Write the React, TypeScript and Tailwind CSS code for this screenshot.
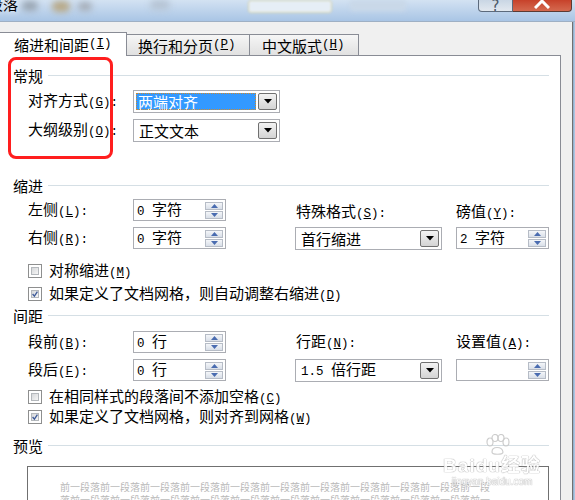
import React from 'react'

// half-width latin, like SimSun's ascii glyphs
function A({ children }: { children: React.ReactNode }) {
  return <span className="font-['Liberation_Mono',monospace] text-[12.5px] whitespace-pre">{children}</span>
}

function Key({ k, colon = true }: { k: string; colon?: boolean }) {
  return (
    <A>
      (<u>{k}</u>){colon ? ':' : ''}
    </A>
  )
}

function DownArrow() {
  return (
    <svg width="8" height="5" viewBox="0 0 8 5">
      <path d="M0 0 H8 L4 4.5 Z" fill="#000" />
    </svg>
  )
}

function Spin({ num, unit }: { num?: string; unit?: string }) {
  return (
    <div className="w-[93px] h-[22px] border border-[#abadb3] bg-white flex items-center justify-between pl-[3px] pr-[2px]">
      <span className="whitespace-pre">
        {num && <A>{num + ' '}</A>}
        {unit}
      </span>
      <div className="flex flex-col gap-px">
        <div className="w-[18px] h-[8px] border border-[#b6bcc6] bg-gradient-to-b from-[#f4f6f9] to-[#d9dfe8] flex items-center justify-center">
          <svg width="7" height="4" viewBox="0 0 7 4"><path d="M0 4 H7 L3.5 0 Z" fill="#4a6cb0" /></svg>
        </div>
        <div className="w-[18px] h-[8px] border border-[#b6bcc6] bg-gradient-to-b from-[#f4f6f9] to-[#d9dfe8] flex items-center justify-center">
          <svg width="7" height="4" viewBox="0 0 7 4"><path d="M0 0 H7 L3.5 4 Z" fill="#4a6cb0" /></svg>
        </div>
      </div>
    </div>
  )
}

function Select({ children, highlight }: { children: React.ReactNode; highlight?: boolean }) {
  return (
    <div className="w-[147px] h-[23px] border border-[#abadb3] bg-white flex items-stretch p-[2px]">
      <div className="flex-1 flex items-center mr-[2px]">
        {highlight ? (
          <div className="w-full h-full bg-[#3399ff] text-white flex items-center pl-[2px] outline outline-1 outline-dotted outline-[#d08a2c] -outline-offset-1">
            {children}
          </div>
        ) : (
          <span className="pl-[3px] whitespace-pre">{children}</span>
        )}
      </div>
      <div className="w-[19px] border border-[#707070] rounded-[2px] bg-gradient-to-b from-[#f3f3f3] to-[#d4d4d4] flex items-center justify-center">
        <DownArrow />
      </div>
    </div>
  )
}

function Check({ checked }: { checked?: boolean }) {
  return (
    <div className="w-[14px] h-[14px] border border-[#8e8f8f] bg-white p-[2px]">
      <div className="w-full h-full border border-[#b4b8bc] bg-gradient-to-br from-[#d6d8da] to-[#f6f6f6] flex items-center justify-center">
        {checked && (
          <svg width="10" height="10" viewBox="0 0 10 10" className="-mt-px">
            <path d="M1 5 L4 8.5 L9 1" stroke="#3d5a99" strokeWidth="2.2" fill="none" />
          </svg>
        )}
      </div>
    </div>
  )
}

function Section({ title, className }: { title: string; className: string }) {
  return (
    <div className={'flex items-center h-[20px] ' + className}>
      <span>{title}</span>
      <div className="flex-1 h-px bg-[#d5dfe5] ml-[5px]" />
    </div>
  )
}

function CheckRow({ children, checked, className = '' }: { children: React.ReactNode; checked?: boolean; className?: string }) {
  return (
    <div className={'flex items-center h-[20px] ml-[15px] gap-[7px] ' + className}>
      <Check checked={checked} />
      <span>{children}</span>
    </div>
  )
}

export default function App() {
  const line1 = '前一段落'.repeat(10) + '前一段'
  const line2 = '落' + '前一段落'.repeat(10) + '前一'

  return (
    <div className="w-[575px] h-[500px] overflow-hidden relative flex flex-col bg-[#f0f0f0] text-[15px] leading-none text-black font-['Noto_Sans_CJK_SC','Noto_Sans',sans-serif]">
      {/* title bar */}
      <div className="h-[21px] shrink-0 relative overflow-hidden flex bg-gradient-to-b from-[#d3e2f2] to-[#a9c5e5]">
        <div className="absolute left-[22px] top-[1px] w-[16px] h-[10px] rounded-full bg-[#9aa6b3] blur-[3px]" />
        <div className="absolute left-[52px] top-[1px] w-[18px] h-[11px] rounded-full bg-[#b8a988] blur-[3px]" />
        <div className="absolute left-[78px] top-[2px] w-[14px] h-[9px] rounded-full bg-[#a6aeb8] blur-[3px]" />
        <div className="absolute left-[150px] top-[0px] w-[20px] h-[10px] rounded-full bg-[#b6c4d4] blur-[3px]" />
        <div className="absolute left-[248px] top-[0px] w-[84px] h-[13px] rounded-[3px] bg-[#e6eef6] border border-[#d8d6b0] blur-[1px]" />
        <div className="absolute left-[350px] top-[0px] w-[56px] h-[11px] rounded-[3px] bg-[#c9d8e8] blur-[2px]" />
        <span className="relative ml-[-12px] mt-[-4px] [text-shadow:0_0_6px_#fff]">段落</span>
        <div className="flex-1" />
        <div className="relative flex mr-[3px] h-[12px]">
          <div className="w-[35px] h-[12px] border border-[#5c6a7c] border-t-0 rounded-bl-[4px] bg-gradient-to-b from-[#c9d6e4] to-[#e2e8ef] flex justify-center items-end overflow-hidden">
            <span className="text-[15px] text-[#4a5566] mb-[-3px] font-['DejaVu_Sans',sans-serif]">?</span>
          </div>
          <div className="w-[59px] h-[12px] border border-[#5c3a33] border-t-0 border-l-0 rounded-br-[4px] bg-gradient-to-b from-[#c7412a] to-[#d4694f] flex justify-center items-end overflow-hidden">
            <svg width="16" height="9" viewBox="0 0 16 9" className="mb-[2px]">
              <path d="M1 8 L8 1 L15 8" stroke="#fff" strokeWidth="3" fill="none" />
            </svg>
          </div>
        </div>
      </div>

      {/* dialog body */}
      <div className="flex-1 flex border-t border-[#9fb0c4]">
        <div className="w-[573px] flex flex-col border-r border-[#707070] pt-[10px]">
          {/* tabs */}
          <div className="flex items-end h-[24px] -ml-px relative z-10 -mb-px">
            <div className="w-[128px] h-[24px] bg-white border border-b-0 border-[#898c95] flex items-center pl-[14px]">
              缩进和间距<Key k="I" colon={false} />
            </div>
            <div className="w-[124px] h-[22px] -ml-px border border-[#898c95] bg-gradient-to-b from-[#f6f6f6] to-[#e1e1e1] flex items-center pl-[11px]">
              换行和分页<Key k="P" colon={false} />
            </div>
            <div className="w-[110px] h-[22px] -ml-px border border-[#898c95] bg-gradient-to-b from-[#f6f6f6] to-[#e1e1e1] flex items-center pl-[12px]">
              中文版式<Key k="H" colon={false} />
            </div>
          </div>

          {/* panel */}
          <div className="flex-1 w-[562px] -ml-px bg-white border border-[#898c95] pl-[13px] pr-[11px] flex flex-col">
            <Section title="常规" className="mt-[9px]" />
            <div className="flex items-center h-[22px] ml-[15px] mt-[5px]">
              <span className="w-[105px]">对齐方式<Key k="G" /></span>
              <Select highlight>两端对齐</Select>
            </div>
            <div className="flex items-center h-[22px] ml-[15px] mt-[7px]">
              <span className="w-[105px]">大纲级别<Key k="O" /></span>
              <Select>正文文本</Select>
            </div>

            <Section title="缩进" className="mt-[34px]" />
            <div className="flex items-center h-[22px] ml-[15px] mt-[4px]">
              <span className="w-[105px]">左侧<Key k="L" /></span>
              <Spin num="0" unit="字符" />
              <div className="w-[69px]" />
              <span className="w-[161px] pl-px pt-[3px]">特殊格式<Key k="S" /></span>
              <span className="pt-[3px]">磅值<Key k="Y" /></span>
            </div>
            <div className="flex items-center h-[22px] ml-[15px] mt-[6px]">
              <span className="w-[105px]">右侧<Key k="R" /></span>
              <Spin num="0" unit="字符" />
              <div className="w-[69px]" />
              <Select>首行缩进</Select>
              <div className="w-[14px]" />
              <Spin num="2" unit="字符" />
            </div>
            <CheckRow className="mt-[12px]">对称缩进<Key k="M" colon={false} /></CheckRow>
            <CheckRow checked className="mt-[3px]">如果定义了文档网格，则自动调整右缩进<Key k="D" colon={false} /></CheckRow>

            <Section title="间距" className="mt-[1px]" />
            <div className="flex items-center h-[22px] ml-[15px] mt-[6px]">
              <span className="w-[105px]">段前<Key k="B" /></span>
              <Spin num="0" unit="行" />
              <div className="w-[69px]" />
              <span className="w-[161px] pl-px">行距<Key k="N" /></span>
              <span>设置值<Key k="A" /></span>
            </div>
            <div className="flex items-center h-[22px] ml-[15px] mt-[6px]">
              <span className="w-[105px]">段后<Key k="F" /></span>
              <Spin num="0" unit="行" />
              <div className="w-[69px]" />
              <Select><A>1.5 </A>倍行距</Select>
              <div className="w-[14px]" />
              <Spin />
            </div>
            <CheckRow className="mt-[6px]">在相同样式的段落间不添加空格<Key k="C" colon={false} /></CheckRow>
            <CheckRow checked>如果定义了文档网格，则对齐到网格<Key k="W" colon={false} /></CheckRow>

            <Section title="预览" className="mt-[8px]" />
            <div className="mt-[11px] ml-[14px] h-[80px] border border-[#707070] bg-white pl-[32px] pt-[15px] flex flex-col gap-[3px] text-[10px] text-[#b9b9b9] whitespace-nowrap">
              <div>{line1}</div>
              <div>{line2}</div>
            </div>
          </div>
        </div>
        <div className="flex-1 bg-gradient-to-r from-[#8aa7c8] to-[#b8cfe6]" />
      </div>

      {/* red annotation */}
      <div className="absolute left-[8px] top-[57px] w-[105px] h-[102px] border-[3px] border-[#ff1e1e] rounded-[8px]" />

      {/* watermark */}
      <div className="absolute left-[438px] top-[434px] w-[108px] flex flex-col items-center text-white [text-shadow:0_0_1px_#9a9a9a,0_0_1px_#9a9a9a] opacity-90">
        <svg width="26" height="22" viewBox="0 0 26 22" className="ml-[10px]">
          <g fill="none" stroke="#c8c8c8" strokeWidth="1.2">
            <ellipse cx="6" cy="8" rx="3" ry="4" />
            <ellipse cx="11" cy="4" rx="3" ry="3.5" />
            <ellipse cx="17" cy="4" rx="3" ry="3.5" />
            <ellipse cx="22" cy="8" rx="3" ry="4" />
            <path d="M8 18 C8 12 18 12 19 18 C19 21 8 21 8 18 Z" />
          </g>
        </svg>
        <div className="text-[19px] font-bold tracking-[1px] font-['Liberation_Sans','Noto_Sans_CJK_SC',sans-serif]">Baidu经验</div>
        <div className="text-[10px] mt-[2px] font-['Liberation_Sans',sans-serif]">jingyan.baidu.com</div>
      </div>
    </div>
  )
}
